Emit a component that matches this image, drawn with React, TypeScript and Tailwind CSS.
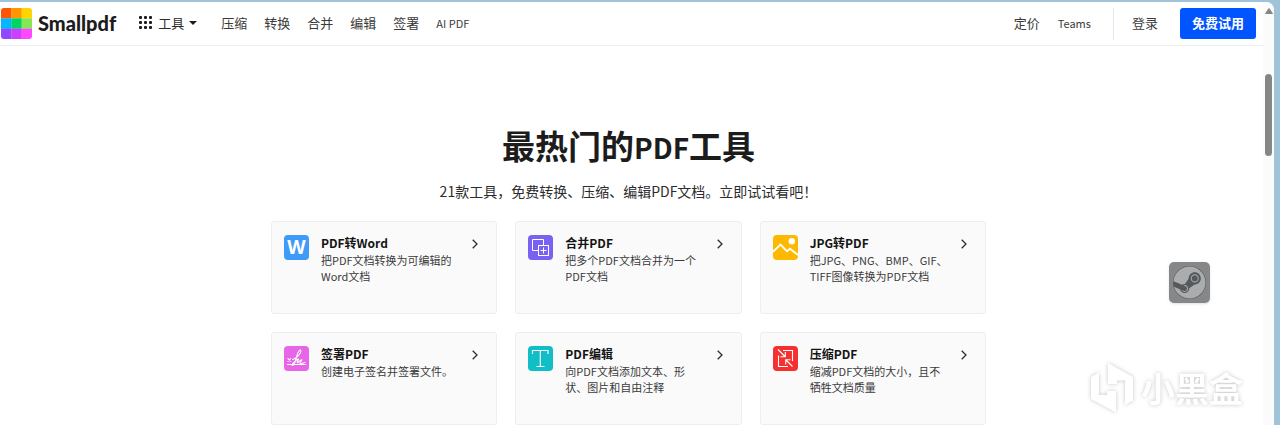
import type { ReactNode } from 'react'
import { FaSteam } from 'react-icons/fa'

const logoColors = [
  ['#ff5500', '#ff9500', '#ffd400'],
  ['#00b8ff', '#00d564', '#87e653'],
  ['#8f47ff', '#cb3fff', '#ff47ff'],
]

const navLinks = ['压缩', '转换', '合并', '编辑', '签署']

type Tool = {
  title: string
  desc: string
  icon: ReactNode
}

const tools: Tool[] = [
  {
    title: 'PDF转Word',
    desc: '把PDF文档转换为可编辑的Word文档',
    icon: (
      <ToolIcon color="#3f9bf7">
        <text x="12.5" y="19" textAnchor="middle" fill="#fff" className="font-['Noto_Sans',sans-serif] text-[19px] font-bold">
          W
        </text>
      </ToolIcon>
    ),
  },
  {
    title: '合并PDF',
    desc: '把多个PDF文档合并为一个PDF文档',
    icon: (
      <ToolIcon color="#7961f2">
        <g fill="none" stroke="#fff" strokeWidth="1">
          <path d="M10.5 15.5h-6v-11h11v6" />
          <rect x="10.5" y="10.5" width="10" height="10" />
          <path d="M15.5 12.5v6M12.5 15.5h6" />
        </g>
      </ToolIcon>
    ),
  },
  {
    title: 'JPG转PDF',
    desc: '把JPG、PNG、BMP、GIF、TIFF图像转换为PDF文档',
    icon: (
      <ToolIcon color="#ffb800">
        <circle cx="18.8" cy="6.2" r="3.2" fill="#fff" />
        <path d="M0 16.8 7.5 9.5l6.5 6.8 3-2.6 8 6.3" fill="none" stroke="#fff" strokeWidth="1.9" />
      </ToolIcon>
    ),
  },
  {
    title: '签署PDF',
    desc: '创建电子签名并签署文件。',
    icon: (
      <ToolIcon color="#e765e6">
        <g fill="none" stroke="#fff" strokeWidth="1.1" strokeLinecap="round" strokeLinejoin="round">
          <path d="m4 12.5 2.5 3m0-3-2.5 3M3.5 18.5h18" />
          <path d="M8.5 13.5c4-1 9-6.5 8.3-9-1-2-3.300 2.500-4.300 6.500s-2 8.500-4 8.500c-1.500-.5 2-4.500 5.500-6.500 1.500-.5-1.800 3.500-.5 3.700 1 .1 2.300-3.200 4.500-3-.2 1.300-3.300 3.800-1.500 4 1.700 0 2.300-1.200 4.500-1.200" />
        </g>
      </ToolIcon>
    ),
  },
  {
    title: 'PDF编辑',
    desc: '向PDF文档添加文本、形状、图片和自由注释',
    icon: (
      <ToolIcon color="#0fbec7">
        <path d="M4.5 8V4.5H20V8M12.3 4.5V20M8.5 20.500h8" fill="none" stroke="#fff" strokeWidth="1.2" />
      </ToolIcon>
    ),
  },
  {
    title: '压缩PDF',
    desc: '缩减PDF文档的大小，且不牺牲文档质量',
    icon: (
      <ToolIcon color="#f53030">
        <g fill="none" stroke="#fff" strokeWidth="1.1">
          <path d="M10 4.5h9.5V15M5.5 9.5v11H15" />
          <path d="m5 3.5 7 7M12.3 6v4.7H7.500M19.500 20.500l-6.500-6.500M12.700 18.500v-4.700h4.800" />
        </g>
      </ToolIcon>
    ),
  },
]

function ToolIcon({ color, children }: { color: string; children: ReactNode }) {
  return (
    <svg viewBox="0 0 25 25" className="size-[25px] shrink-0" aria-hidden="true">
      <rect width="25" height="25" rx="4" fill={color} />
      {children}
    </svg>
  )
}

function Logo() {
  return (
    <a href="#" className="flex items-center gap-[6px] text-[#1c1c1c]">
      <svg viewBox="0 0 31 31" className="size-[31px]" aria-hidden="true">
        <clipPath id="logo-clip">
          <rect width="31" height="31" rx="3" />
        </clipPath>
        <g clipPath="url(#logo-clip)">
          {logoColors.map((row, y) =>
            row.map((fill, x) => (
              <rect key={fill} x={x * 10.333} y={y * 10.333} width="10.5" height="10.5" fill={fill} />
            ))
          )}
        </g>
      </svg>
      <span className="pb-[2px] font-[Lato] text-[20px] leading-6 font-black">Smallpdf</span>
    </a>
  )
}

function Header() {
  return (
    <header className="flex h-11 items-center border-b border-[#efefef] pr-[7px] pl-px text-[13px] leading-5 text-[#3a3a3a]">
      <Logo />
      <button className="ml-[23px] flex items-center pb-[2px] text-[#2c2c2c]">
        <svg viewBox="0 0 13 13" className="mr-[6px] size-[13px]" fill="#1c1c1c" aria-hidden="true">
          {[0, 5, 10].map(y => [0, 5, 10].map(x => <rect key={`${x}-${y}`} x={x} y={y} width="3" height="3" rx="1" />))}
        </svg>
        工具
        <svg viewBox="0 0 8 4" className="ml-[5px] h-1 w-2" aria-hidden="true">
          <path d="M0 0h8L4 4z" fill="#1c1c1c" />
        </svg>
      </button>
      <nav className="ml-[24px] flex gap-[17px] pb-[2px]">
        {navLinks.map(label => (
          <a key={label} href="#">{label}</a>
        ))}
        <a href="#" className="text-[11px]">AI PDF</a>
      </nav>
      <div className="ml-auto flex items-center">
        <a href="#" className="pb-[2px]">定价</a>
        <a href="#" className="ml-[18px] pb-[2px] text-[11px]">Teams</a>
        <a href="#" className="ml-[22px] flex h-8 items-center border-l border-[#e6e6e6] pb-[2px] pl-[18px]">登录</a>
        <button className="ml-[22px] h-[31px] rounded-[3px] bg-[#0055ff] px-3 pb-[2px] font-bold text-white">免费试用</button>
      </div>
    </header>
  )
}

function ToolCard({ title, desc, icon }: Tool) {
  return (
    <a href="#" className="flex h-[93px] rounded-[3px] border border-[#eeeeee] bg-[#fafafa] px-3 pt-[13px]">
      {icon}
      <div className="-mt-px ml-3 w-[139px]">
        <h3 className="text-[12px] leading-[18px] font-bold text-[#141414]">{title}</h3>
        <p className="text-[11px] leading-4 text-[#3a3a3a]">{desc}</p>
      </div>
      <svg viewBox="0 0 6 10" className="mt-1 mr-[6px] ml-auto h-[10px] w-[6px]" aria-hidden="true">
        <path d="M.7.7 5 5 .7 9.3" fill="none" stroke="#2c2c2c" strokeWidth="1.3" />
      </svg>
    </a>
  )
}

function Watermark() {
  return (
    <div className="absolute right-[37px] bottom-3 flex items-center gap-2 text-white drop-shadow-[0_0_2px_rgba(0,0,0,0.22)]">
      <svg viewBox="0 0 42 50" className="h-[50px] w-[42px]" fill="currentColor" aria-hidden="true">
        <path d="M0 14 8 9.5V32h8v-4h9v21.5L0 36z" />
        <path d="M17 0l25 14v23.5L34 42V17.5h-8V21h-9z" />
      </svg>
      <span className="text-[34px] leading-10 font-bold">小黑盒</span>
    </div>
  )
}

export default function App() {
  return (
    <div className="relative h-screen overflow-hidden bg-[#9fc3d9] pt-[2px] pr-[6px] font-['Noto_Sans_CJK_SC',sans-serif]">
      <div className="flex h-full overflow-hidden rounded-tr-lg bg-white">
        <div className="min-w-0 flex-1">
          <Header />
          <main className="pt-[75px] pr-[6px]">
            <h1 className="h-12 text-center text-[33px] leading-[48px] font-bold text-[#1c1c1c]">
              最热门的<span className="text-[28px]">PDF</span>工具
            </h1>
            <p className="mt-3 text-center text-[14px] leading-5 text-[#2c2c2c]">
              21款工具，免费转换、压缩、编辑PDF文档。立即试试看吧！
            </p>
            <div className="mx-auto mt-5 grid max-w-[715px] grid-cols-3 gap-[18px]">
              {tools.map(tool => (
                <ToolCard key={tool.title} {...tool} />
              ))}
            </div>
          </main>
        </div>
        {/* scrollbar */}
        <div className="flex w-[11px] flex-col items-center bg-[#fbfbfb] pt-[6px]">
          <svg viewBox="0 0 8 6" className="h-[6px] w-2" aria-hidden="true">
            <path d="M4 .5 7.5 5.5h-7z" fill="#868686" stroke="#868686" strokeLinejoin="round" />
          </svg>
          <div className="mt-[60px] h-[82px] w-[7px] rounded-full bg-[#868686]" />
        </div>
      </div>
      <button
        aria-label="Steam"
        className="absolute top-[262px] right-[70px] flex size-[41px] items-center justify-center rounded-[5px] bg-[#858789] shadow-sm"
      >
        <span className="rounded-full bg-[#55595d]">
          <FaSteam size={33} className="text-[#aaacad]" />
        </span>
      </button>
      <Watermark />
    </div>
  )
}
